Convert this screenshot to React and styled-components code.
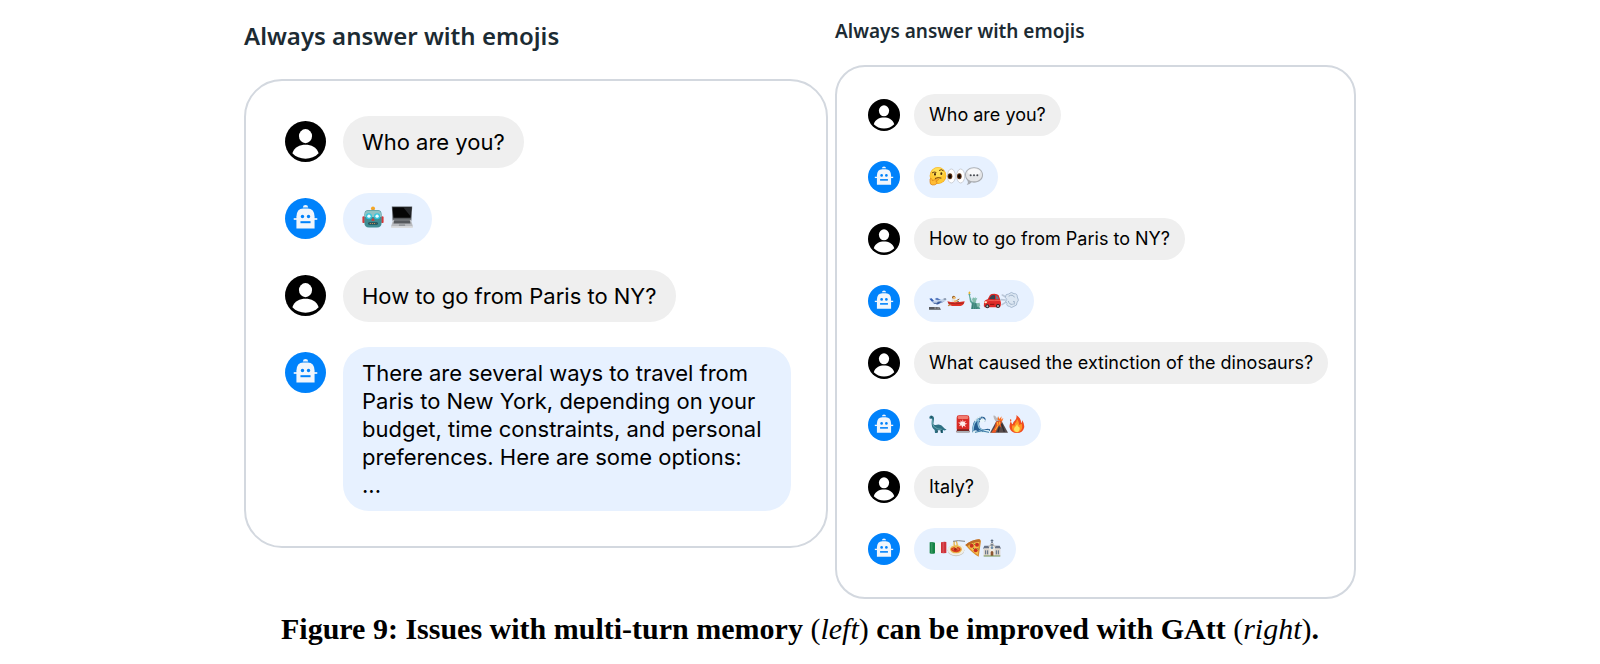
import styled, { createGlobalStyle } from "styled-components";

const COLORS = {
  title: "#1c2b33",
  border: "#d3d8df",
  user: "#efefef",
  bot: "#e7f1ff",
  blue: "#0082fb",
  black: "#000000",
};

const GlobalStyle = createGlobalStyle`
  * {
    box-sizing: border-box;
  }
  body {
    margin: 0;
    background: #ffffff;
    color: ${COLORS.black};
  }
`;

const EMOJIS = {
  robot: {
    label: "robot",
    art: (
      <>
        <circle cx="27" cy="6" r="5" fill="#f5a623" />
        <rect x="25" y="9" width="5" height="6" fill="#8b8f93" />
        <rect x="1" y="25" width="6" height="17" rx="3" fill="#d63a3a" />
        <rect x="47" y="25" width="6" height="17" rx="3" fill="#d63a3a" />
        <path d="M6 20Q6 10 17 10H37Q48 10 48 20V42Q48 53 37 53H17Q6 53 6 42Z" fill="#3f8d93" />
        <path d="M7 20Q7 11 17 11H37Q47 11 47 20V27H7Z" fill="#8fc3c4" />
        <circle cx="17" cy="25" r="7.500" fill="#35c4dc" />
        <circle cx="37" cy="25" r="7.500" fill="#35c4dc" />
        <circle cx="17" cy="25" r="4" fill="#effcff" />
        <circle cx="37" cy="25" r="4" fill="#effcff" />
        <path d="M27 29L31 36H23Z" fill="#e03131" />
        <rect x="15" y="40" width="24" height="6" rx="3" fill="#1f4e57" />
        <path d="M19 43H35" stroke="#e4a261" strokeWidth="2" strokeDasharray="3 2" />
      </>
    ),
  },
  laptop: {
    label: "laptop",
    art: (
      <>
        <path d="M2 1H52L50 36H4Z" fill="#55585c" />
        <path d="M4 3H50L48 29H6Z" fill="#050505" />
        <path d="M30 3H50L48 25Z" fill="#26282b" />
        <path d="M5 34H49L54 51H0Z" fill="#b9bbbf" />
        <path d="M8 35H46L48 43H6Z" fill="#56595d" />
        <path d="M20 45H34L35 49H19Z" fill="#94979b" />
        <rect y="50" width="54" height="4" rx="2" fill="#dcdddf" />
      </>
    ),
  },
  thinking: {
    label: "thinking face",
    art: (
      <>
        <circle cx="27" cy="26" r="25" fill="#f2a51f" />
        <circle cx="27" cy="25" r="24" fill="#ffc933" />
        <ellipse cx="27" cy="16" rx="18" ry="13" fill="#ffdf57" />
        <path d="M10 17Q15 13 21 16M31 10Q37 5 43 11" fill="none" stroke="#6f410d" strokeWidth="3" strokeLinecap="round" />
        <ellipse cx="18" cy="22" rx="3" ry="4" fill="#4b2c0b" />
        <ellipse cx="37" cy="20" rx="3" ry="4" fill="#4b2c0b" />
        <path d="M19 34Q27 30 36 33" fill="none" stroke="#6f410d" strokeWidth="3" strokeLinecap="round" />
        <path d="M3 36Q6 31 9 37L10 41L25 35Q30 35 28 39L20 42Q27 43 23 50Q19 55 10 54Q2 52 3 44Z" fill="#ffbc35" stroke="#d77b16" strokeWidth="2" />
      </>
    ),
  },
  eyes: {
    label: "eyes",
    art: (
      <>
        <ellipse cx="13" cy="27" rx="12" ry="21" fill="#ffffff" stroke="#b9bcc3" strokeWidth="2" />
        <ellipse cx="41" cy="27" rx="12" ry="21" fill="#ffffff" stroke="#b9bcc3" strokeWidth="2" />
        <ellipse cx="9" cy="28" rx="7" ry="9" fill="#5f3214" />
        <ellipse cx="37" cy="28" rx="7" ry="9" fill="#5f3214" />
        <ellipse cx="9" cy="28" rx="4" ry="6" fill="#0d0704" />
        <ellipse cx="37" cy="28" rx="4" ry="6" fill="#0d0704" />
      </>
    ),
  },
  speech: {
    label: "speech balloon",
    art: (
      <>
        <path d="M27 1C43 1 54 11 54 24C54 38 42 47 27 47L20 46Q15 52 5 54Q11 49 8 42Q0 35 0 24C0 11 12 1 27 1Z" fill="#a9acb1" />
        <path d="M27 3C41 3 51 12 51 23C51 35 41 43 27 43C12 43 3 35 3 23C3 12 13 3 27 3Z" fill="#e4e5e7" />
        <ellipse cx="27" cy="15" rx="19" ry="10" fill="#f8f8f9" />
        <circle cx="17" cy="25" r="3" fill="#45484e" />
        <circle cx="27" cy="25" r="3" fill="#45484e" />
        <circle cx="37" cy="25" r="3" fill="#45484e" />
      </>
    ),
  },
  plane: {
    label: "airplane departure",
    art: (
      <>
        <path d="M0 48H31L36 56H0Z" fill="#55585d" />
        <path d="M16 51H33" stroke="#d8dadd" strokeWidth="2" strokeDasharray="6 3" />
        <path d="M17 24L24 20L38 28L30 31Z" fill="#5578bd" />
        <path d="M3 23L8 23L15 29Q32 28 45 23Q54 21 54 25Q51 31 40 34Q22 40 12 36Z" fill="#c2d2e8" />
        <path d="M10 34Q22 38 42 32L48 29Q35 39 16 39Z" fill="#5877ae" />
        <path d="M26 32L39 31L28 40L22 41Z" fill="#395c9f" />
        <path d="M1 23L8 22L15 30L9 32Z" fill="#355fb4" />
        <path d="M44 24L51 24" stroke="#24334c" strokeWidth="2" />
      </>
    ),
  },
  rowing: {
    label: "person rowing boat",
    art: (
      <>
        <path d="M5 42L37 24" stroke="#9b622f" strokeWidth="3" />
        <circle cx="20" cy="19" r="5" fill="#9a6228" />
        <circle cx="22" cy="21" r="4" fill="#f3bf72" />
        <path d="M14 25Q21 23 26 27L33 34H14Z" fill="#e8dfd5" />
        <path d="M20 29L32 27L31 31L23 34Z" fill="#efb15f" />
        <path d="M25 35L34 29L39 37H25Z" fill="#765d44" />
        <path d="M1 31Q20 37 53 31Q51 43 40 45H16Q5 43 1 31Z" fill="#df3025" />
        <path d="M3 36Q24 41 51 36" fill="none" stroke="#8f1f1b" strokeWidth="2" />
        <path d="M2 44L9 38L12 41L5 46Z" fill="#bc7b3c" />
      </>
    ),
  },
  liberty: {
    label: "Statue of Liberty",
    art: (
      <>
        <path d="M13 1Q19 5 15 9H11Q9 5 13 1Z" fill="#e9b42e" />
        <path d="M10 9H17L15 14L20 30L32 40L27 46L15 32L12 14Z" fill="#5ba69a" />
        <path d="M20 21L23 24L24 18L28 23L31 17L32 23L37 20L35 26H21Z" fill="#79b9a9" />
        <ellipse cx="28" cy="29" rx="6" ry="7" fill="#85beac" />
        <path d="M21 34Q33 33 39 40L46 54H18Z" fill="#4f988d" />
        <path d="M24 36L22 54M31 37L29 54M37 43L35 54" stroke="#2b6c67" strokeWidth="2" />
        <path d="M35 37L44 35L46 46L37 48Z" fill="#88bdad" />
      </>
    ),
  },
  car: {
    label: "automobile",
    art: (
      <>
        <path d="M3 35Q4 27 14 25L21 12Q24 8 34 8Q43 8 47 13L52 27Q55 33 53 46L48 49H5Q1 45 3 35Z" fill="#dd2926" />
        <path d="M18 24L24 14Q30 11 36 13L36 25Z" fill="#354351" />
        <path d="M39 13Q45 15 48 25H39Z" fill="#67788a" />
        <path d="M5 33Q16 26 35 29L52 28" fill="none" stroke="#ff7566" strokeWidth="2" />
        <circle cx="13" cy="46" r="6" fill="#27282c" />
        <circle cx="45" cy="45" r="6" fill="#27282c" />
        <circle cx="13" cy="46" r="3" fill="#b6b8bd" />
        <circle cx="45" cy="45" r="3" fill="#b6b8bd" />
        <ellipse cx="8" cy="34" rx="4" ry="3" fill="#fff1ca" />
        <path d="M21 40H34" stroke="#87140f" strokeWidth="3" />
      </>
    ),
  },
  dash: {
    label: "dashing away",
    art: (
      <>
        <path d="M4 12L13 17M0 26L13 27M3 41L14 34" stroke="#bac7d7" strokeWidth="5" strokeLinecap="round" />
        <path d="M13 19Q13 8 23 9Q31 0 39 8Q49 7 49 18Q56 28 48 35Q49 44 39 46Q31 53 25 46Q15 45 18 37Q9 29 18 26Z" fill="#dbe6f2" stroke="#8ea5bf" strokeWidth="2" />
        <path d="M24 15Q35 8 40 18M37 32Q43 26 39 40M22 31Q25 42 34 40" fill="none" stroke="#9db1c8" strokeWidth="3" strokeLinecap="round" />
      </>
    ),
  },
  sauropod: {
    label: "sauropod",
    art: (
      <>
        <path d="M1 7Q2 1 9 2Q16 4 15 13L13 26Q14 32 24 29Q36 26 43 37Q48 44 54 43Q48 48 42 45L42 54H36L34 46H25L24 54H18L17 45Q6 37 8 20L9 11L2 11Z" fill="#2e7184" />
        <path d="M11 13Q8 29 16 36Q26 44 38 43" fill="none" stroke="#63a4ac" strokeWidth="3" />
        <path d="M25 46V53M37 45V53" stroke="#194857" strokeWidth="3" />
        <circle cx="8" cy="6" r="1.500" fill="#0d2029" />
      </>
    ),
  },
  siren: {
    label: "police car light",
    art: (
      <>
        <rect x="8" y="1" width="38" height="47" rx="7" fill="#d92b25" />
        <rect x="11" y="3" width="32" height="9" rx="4" fill="#f17c70" />
        <path d="M26 13L29 21L36 17L32 24L40 26L32 29L36 36L28 32L25 39L22 31L15 34L19 27L12 23L21 22L18 16L25 21Z" fill="#fff0ec" />
        <path d="M9 43H45L47 52H7Z" fill="#78241f" />
        <rect x="8" y="48" width="38" height="5" rx="2" fill="#a8adb2" />
      </>
    ),
  },
  wave: {
    label: "water wave",
    art: (
      <>
        <path d="M1 53Q-1 24 12 11Q23 1 36 6Q44 11 39 20Q36 12 29 15Q19 20 22 32Q26 45 39 43Q48 39 54 43V53Z" fill="#245d91" />
        <path d="M3 47Q4 20 20 12Q15 29 23 40Q31 49 51 46" fill="none" stroke="#91c5dd" strokeWidth="4" />
        <path d="M8 19Q15 6 28 5M23 16L28 20L28 13L34 20L33 12L40 18" fill="none" stroke="#eaf6fa" strokeWidth="4" />
        <path d="M1 51Q9 41 17 49Q24 43 31 50Q42 41 54 48V54H1Z" fill="#dceff5" />
        <path d="M9 52Q29 43 51 52" fill="none" stroke="#3a79a7" strokeWidth="3" />
      </>
    ),
  },
  volcano: {
    label: "volcano",
    art: (
      <>
        <path d="M10 2Q16 0 19 8Q28 5 29 20H20Q12 16 10 2Z" fill="#b9b6b7" />
        <path d="M23 15L24 3L28 12L35 4L33 14L40 9L36 20Z" fill="#ff6a17" />
        <path d="M0 53L18 20Q27 14 36 20L54 53Z" fill="#574b4a" />
        <path d="M18 20Q27 16 36 20L32 28L34 38L27 31L19 47L16 53H4L15 35Z" fill="#ed5824" />
        <path d="M22 21L24 31L16 45M29 20L29 29" fill="none" stroke="#ffbf35" strokeWidth="3" />
        <path d="M35 27L43 50M28 37L24 51" stroke="#302c30" strokeWidth="4" />
      </>
    ),
  },
  fire: {
    label: "fire",
    art: (
      <>
        <path d="M25 0Q41 12 39 25Q43 21 42 15Q51 28 48 39Q44 54 27 54Q8 53 5 38Q3 27 9 19Q10 26 14 28Q15 20 22 15Q27 9 25 0Z" fill="#f04b20" />
        <path d="M27 12Q35 21 33 30L41 26Q45 38 39 46Q34 53 26 52Q13 50 12 38Q11 32 15 30Q18 34 20 31Q20 24 25 20Z" fill="#ff9424" />
        <path d="M28 26Q27 35 35 38Q36 49 27 52Q18 50 18 42Q18 37 24 33Z" fill="#ffe15a" />
        <path d="M7 12Q13 15 8 20Q4 17 7 12Z" fill="#ef5827" />
      </>
    ),
  },
  italy: {
    label: "flag of Italy",
    art: (
      <>
        <path d="M2 10Q10 8 18 11V43Q10 46 2 43Z" fill="#138344" />
        <path d="M18 11Q28 13 36 10V42Q27 40 18 43Z" fill="#f4f4f4" />
        <path d="M36 10Q45 7 52 9V42Q44 43 36 42Z" fill="#cf3038" />
        <path d="M8 10V43M43 9V42" stroke="#ffffff" strokeOpacity="0.15" strokeWidth="5" />
      </>
    ),
  },
  spaghetti: {
    label: "spaghetti",
    art: (
      <>
        <ellipse cx="27" cy="34" rx="25" ry="18" fill="#c5c4bd" />
        <ellipse cx="27" cy="32" rx="25" ry="17" fill="#efeee7" />
        <ellipse cx="27" cy="31" rx="18" ry="12" fill="#e9b74f" />
        <path d="M13 28Q27 19 39 27Q46 35 29 40Q13 39 12 31Z" fill="#d83b20" />
        <path d="M22 6Q19 18 27 27M27 6Q34 17 27 27" fill="none" stroke="#e9b74f" strokeWidth="4" />
        <path d="M18 7L34 5L54 7" fill="none" stroke="#7e8388" strokeWidth="3" />
        <path d="M17 31Q25 25 36 31" fill="none" stroke="#f29b45" strokeWidth="2" />
        <circle cx="25" cy="31" r="4" fill="#9d2819" />
      </>
    ),
  },
  pizza: {
    label: "pizza",
    art: (
      <>
        <path d="M1 18Q18 4 40 1Q47 0 48 7L41 53Q24 45 1 18Z" fill="#d88c30" />
        <path d="M7 19Q23 8 42 8L39 48Q24 40 7 19Z" fill="#f7bd4b" />
        <path d="M1 18Q20 2 43 1Q47 2 45 8Q21 9 7 22Z" fill="#bd6b28" />
        <circle cx="20" cy="20" r="6" fill="#c93020" />
        <circle cx="36" cy="17" r="6" fill="#c93020" />
        <circle cx="32" cy="34" r="6" fill="#c93020" />
        <path d="M26 14L29 17M24 29L27 27M38 28L40 31" stroke="#46762c" strokeWidth="3" />
      </>
    ),
  },
  church: {
    label: "church",
    art: (
      <>
        <path d="M27 1V12M23 5H31" stroke="#52637a" strokeWidth="3" />
        <path d="M27 8L38 25H16Z" fill="#58677b" />
        <rect x="19" y="20" width="16" height="31" fill="#eee9df" />
        <path d="M4 20H18V29H0ZM36 20H50L54 29H36Z" fill="#697386" />
        <rect x="2" y="28" width="17" height="23" fill="#ded6cb" />
        <rect x="35" y="28" width="17" height="23" fill="#ded6cb" />
        <path d="M17 24L27 12L37 24" fill="none" stroke="#ddd6cc" strokeWidth="3" />
        <circle cx="27" cy="26" r="4" fill="#6a8baa" />
        <path d="M23 51V39Q27 33 31 39V51Z" fill="#8d542f" />
        <path d="M8 34V46M14 34V46M40 34V46M46 34V46" stroke="#566981" strokeWidth="3" />
        <path d="M2 51H52" stroke="#729150" strokeWidth="3" />
      </>
    ),
  },
};

const BEFORE = [
  { from: "user", text: "Who are you?" },
  { from: "bot", emojis: ["robot", " ", "laptop"] },
  { from: "user", text: "How to go from Paris to NY?" },
  {
    from: "bot",
    text: "There are several ways to travel from Paris to New York, depending on your budget, time constraints, and personal preferences. Here are some options:",
    more: "...",
  },
];

const AFTER = [
  { from: "user", text: "Who are you?" },
  { from: "bot", emojis: ["thinking", "eyes", "speech"] },
  { from: "user", text: "How to go from Paris to NY?" },
  { from: "bot", emojis: ["plane", "rowing", "liberty", "car", "dash"] },
  { from: "user", text: "What caused the extinction of the dinosaurs?" },
  { from: "bot", emojis: ["sauropod", " ", "siren", "wave", "volcano", "fire"] },
  { from: "user", text: "Italy?" },
  { from: "bot", emojis: ["italy", "spaghetti", "pizza", "church"] },
];

const UserIcon = () => (
  <svg viewBox="0 0 122 122" role="img" aria-label="User">
    <circle cx="61" cy="61" r="61" fill={COLORS.black} />
    <ellipse cx="61" cy="45" rx="19.500" ry="21" fill="#ffffff" />
    <path d="M22 96C28 78 44 71 61 71S94 78 100 96C90 107 76 112 61 112S32 107 22 96Z" fill="#ffffff" />
  </svg>
);

const BotIcon = () => (
  <svg viewBox="0 0 122 122" role="img" aria-label="Assistant">
    <circle cx="61" cy="61" r="61" fill={COLORS.blue} />
    <g fill="#f1f6fc">
      <path d="M53 28Q54 21 61 21T69 28Z" />
      <path d="M34 55Q35 31 54 31H68Q87 31 88 55V91H34Z" />
      <rect x="26" y="60" width="70" height="5" />
    </g>
    <g fill={COLORS.blue}>
      <circle cx="52" cy="55" r="5" />
      <circle cx="70" cy="55" r="5" />
      <rect x="46" y="69" width="30" height="6" />
    </g>
  </svg>
);

const Emoji = ({ name }) => {
  if (name === " ") return <Space />;
  const { label, art } = EMOJIS[name];
  return (
    <EmojiArt viewBox="0 0 54 54" role="img" aria-label={label}>
      {art}
    </EmojiArt>
  );
};

const Conversation = ({ messages, compact }) => (
  <Dialogue $compact={compact}>
    <Title $compact={compact}>Always answer with emojis</Title>
    <Panel $compact={compact}>
      {messages.map(({ from, text, more, emojis }, i) => (
        <Message key={i} $compact={compact}>
          <Avatar $compact={compact}>{from === "user" ? <UserIcon /> : <BotIcon />}</Avatar>
          <Bubble $from={from} $compact={compact}>
            {emojis ? (
              <EmojiLine $compact={compact}>
                {emojis.map((name, j) => (
                  <Emoji key={j} name={name} />
                ))}
              </EmojiLine>
            ) : (
              <Text>{text}</Text>
            )}
            {more && <Text>{more}</Text>}
          </Bubble>
        </Message>
      ))}
    </Panel>
  </Dialogue>
);

const App = () => {
  return (
    <>
      <GlobalStyle />
      <Figure>
        <Comparison>
          <Conversation messages={BEFORE} />
          <Conversation messages={AFTER} compact />
        </Comparison>
        <Caption>
          Figure 9: Issues with multi-turn memory <Plain>(<em>left</em>)</Plain> can be improved
          with GAtt <Plain>(<em>right</em>)</Plain>.
        </Caption>
      </Figure>
    </>
  );
};

const Figure = styled.figure`
  max-width: 1112px;
  margin: 0 auto;
`;
const Comparison = styled.div`
  display: grid;
  grid-template-columns: 584fr 521fr;
  align-items: start;
  gap: 7px;
`;
const Dialogue = styled.section`
  padding-top: ${({ $compact }) => ($compact ? "17px" : "20px")};
`;
const Title = styled.h2`
  margin: 0;
  padding-bottom: ${({ $compact }) => ($compact ? "20px" : "27px")};
  font-family: "Noto Sans", sans-serif;
  font-size: ${({ $compact }) => ($compact ? "19px" : "24px")};
  line-height: ${({ $compact }) => ($compact ? "28px" : "32px")};
  font-weight: 600;
  color: ${COLORS.title};
`;
const Panel = styled.ul`
  display: flex;
  flex-direction: column;
  gap: ${({ $compact }) => ($compact ? "20px" : "25px")};
  margin: 0;
  padding: ${({ $compact }) => ($compact ? "27px 20px 27px 31px" : "35px 35px 35px 39px")};
  border: 2px solid ${COLORS.border};
  border-radius: ${({ $compact }) => ($compact ? "30px" : "38px")};
  list-style: none;
`;
const Message = styled.li`
  display: flex;
  align-items: flex-start;
  gap: ${({ $compact }) => ($compact ? "14px" : "17px")};
`;
const Avatar = styled.span`
  flex: none;
  width: ${({ $compact }) => ($compact ? "32px" : "41px")};
  margin-top: 5px;

  svg {
    display: block;
  }
`;
const Bubble = styled.div`
  padding: ${({ $compact }) => ($compact ? "10px 15px" : "12px 19px")};
  border-radius: ${({ $compact }) => ($compact ? "21px" : "26px")};
  background: ${({ $from }) => COLORS[$from]};
  font-family: Inter, sans-serif;
  font-size: ${({ $compact }) => ($compact ? "18px" : "22px")};
  line-height: ${({ $compact }) => ($compact ? "22px" : "28px")};
`;
const Text = styled.p`
  margin: 0;
`;
const EmojiLine = styled.div`
  display: flex;
  align-items: center;
  height: ${({ $compact }) => ($compact ? "22px" : "28px")};
  padding-bottom: ${({ $compact }) => ($compact ? "2px" : "4px")};

  svg {
    width: ${({ $compact }) => ($compact ? "18px" : "22px")};
  }
`;
const EmojiArt = styled.svg`
  display: block;
  flex: none;
  aspect-ratio: 1;
  overflow: visible;
`;
const Space = styled.span`
  width: 7px;
`;
const Caption = styled.figcaption`
  padding: 12px 0;
  font-family: "Liberation Serif", serif;
  font-size: 30px;
  font-weight: bold;
  line-height: 36px;
  text-align: center;
`;
const Plain = styled.span`
  font-weight: normal;
`;

export default App;
